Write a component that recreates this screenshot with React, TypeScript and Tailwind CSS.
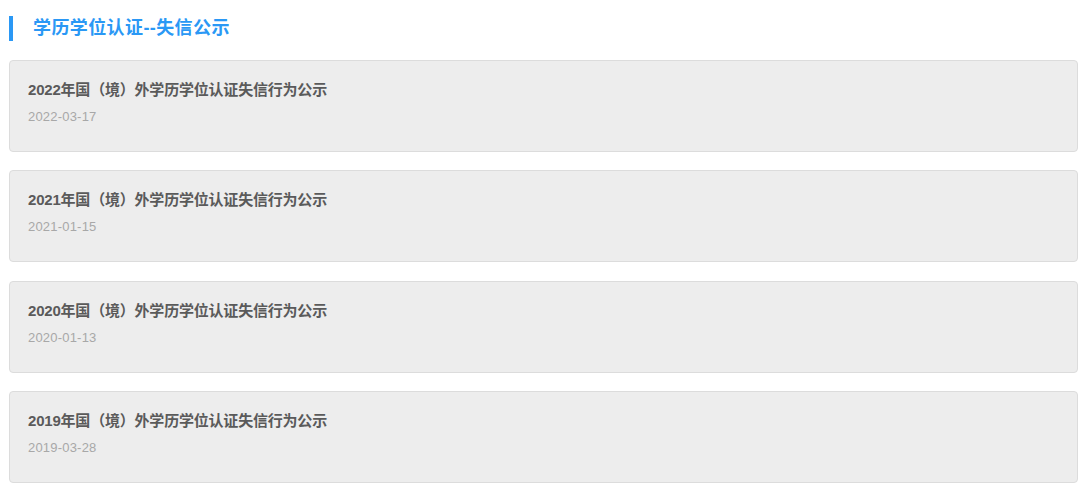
import React from "react";

const items = [
  { title: "2022年国（境）外学历学位认证失信行为公示", date: "2022-03-17" },
  { title: "2021年国（境）外学历学位认证失信行为公示", date: "2021-01-15" },
  { title: "2020年国（境）外学历学位认证失信行为公示", date: "2020-01-13" },
  { title: "2019年国（境）外学历学位认证失信行为公示", date: "2019-03-28" },
];

export default function App() {
  return (
    <div
      className="w-[1080px] h-[494px] bg-white overflow-hidden"
      style={{ fontFamily: '"Liberation Sans", Arial, "Noto Sans CJK SC", sans-serif' }}
    >
      <div className="pl-[9px] pr-[2px] pt-[16px]">
        <div className="flex items-center h-[25px]">
          <div className="w-[4px] h-[25px] bg-[#2a98f5]" />
          <div className="ml-[20px] text-[18px] font-bold text-[#2a98f5] leading-[25px] tracking-[0.4px]">
            学历学位认证--失信公示
          </div>
        </div>
        <div className="mt-[19px] flex flex-col gap-[18.4px]">
          {items.map((it) => (
            <div
              key={it.date}
              className="h-[92px] bg-[#ededed] border border-[#dcdcdc] rounded-[4px] px-[18px] pt-[19px]"
            >
              <div className="text-[15px] font-bold text-[#5a5a5a] leading-[20px] tracking-[-0.2px]">{it.title}</div>
              <div className="mt-[8px] text-[13px] text-[#a8a8a8] leading-[18px] tracking-[0.2px]">{it.date}</div>
            </div>
          ))}
        </div>
      </div>
    </div>
  );
}
